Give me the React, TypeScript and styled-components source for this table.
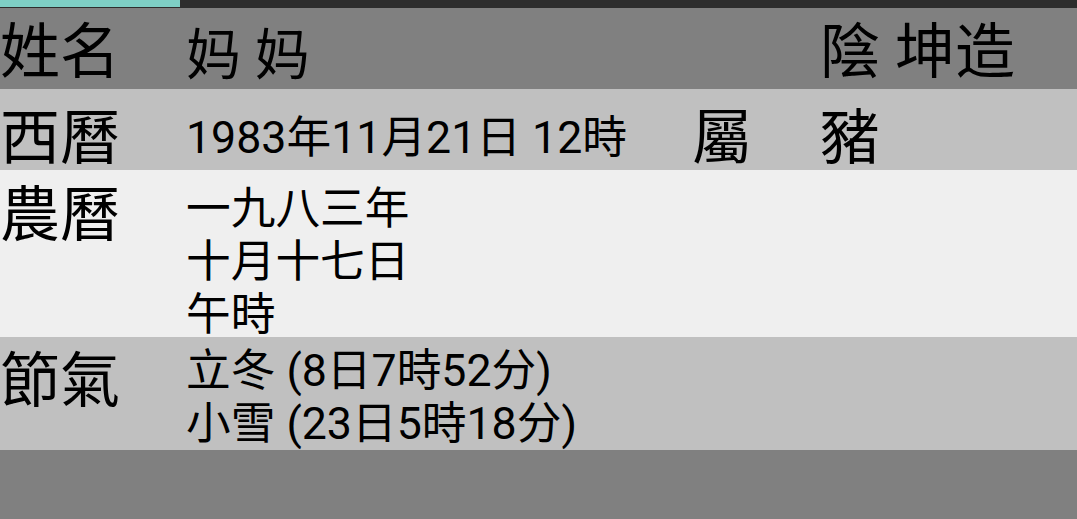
import React from "react";
import styled, { createGlobalStyle } from "styled-components";

const Global = createGlobalStyle`
  html, body { margin: 0; padding: 0; background: #808080; }
  body { font-family: Roboto, "Noto Sans CJK SC", sans-serif; color: #000; }
  #root { min-height: 100vh; }
`;

const Page = styled.div`
  display: flex;
  flex-direction: column;
  width: 1077px;
  min-height: 519px;
  background: #808080;
`;

const TabBar = styled.div`
  height: 8px;
  background: #2d2d2d;
  display: flex;
  align-items: flex-start;
`;

const TabIndicator = styled.div`
  width: 180px;
  height: 7px;
  background: #7ecfc5;
`;

const Row = styled.div<{ $bg: string; $h: number; $pad: number }>`
  display: grid;
  grid-template-columns: 186px 506px 128px 1fr;
  align-items: start;
  height: ${(p) => p.$h}px;
  box-sizing: border-box;
  padding-top: ${(p) => p.$pad}px;
  background: ${(p) => p.$bg};
`;

const Label = styled.div<{ $off?: number }>`
  font-size: 60px;
  line-height: 64px;
  white-space: nowrap;
  margin-top: ${(p) => p.$off ?? 0}px;
`;

const Big = styled.div<{ $col: string; $off?: number; $size?: number }>`
  grid-column: ${(p) => p.$col};
  font-size: ${(p) => p.$size ?? 60}px;
  line-height: 64px;
  white-space: pre;
  margin-top: ${(p) => p.$off ?? 0}px;
`;

const Value = styled.div<{ $col?: string; $off?: number }>`
  grid-column: ${(p) => p.$col ?? "2 / 5"};
  font-size: 44.7px;
  line-height: 53px;
  white-space: pre;
  margin-top: ${(p) => p.$off ?? 0}px;
`;

export default function App() {
  return (
    <>
      <Global />
      <Page>
        <TabBar>
          <TabIndicator />
        </TabBar>
        <Row $bg="#808080" $h={81} $pad={13}>
          <Label>姓名</Label>
          <Big $col="2 / 4" $size={55} $off={2}>妈 妈</Big>
          <Big $col="4 / 5">陰 坤造</Big>
        </Row>
        <Row $bg="#c0c0c0" $h={81} $pad={18}>
          <Label>西曆</Label>
          <Value $col="2 / 3" $off={5}>1983年11月21日 12時</Value>
          <Big $col="3 / 4">屬</Big>
          <Big $col="4 / 5">豬</Big>
        </Row>
        <Row $bg="#efefef" $h={167} $pad={13}>
          <Label $off={1}>農曆</Label>
          <Value>{"一九八三年\n十月十七日\n午時"}</Value>
        </Row>
        <Row $bg="#c0c0c0" $h={113} $pad={8}>
          <Label $off={5}>節氣</Label>
          <Value>{"立冬 (8日7時52分)\n小雪 (23日5時18分)"}</Value>
        </Row>
      </Page>
    </>
  );
}
